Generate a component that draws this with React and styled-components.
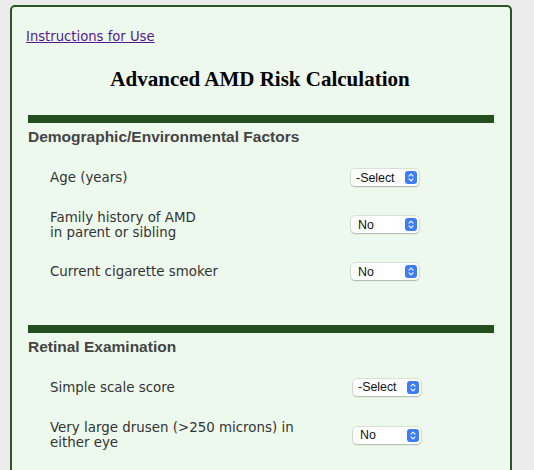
import React from "react";
import styled, { createGlobalStyle } from "styled-components";

const GlobalStyle = createGlobalStyle`
  body {
    margin: 0;
    background: #ececec;
  }
`;

const Card = styled.div`
  margin: 5px 22px 0 10px;
  padding: 20px 16px 40px 14px;
  min-height: 600px;
  border: 2px solid #285626;
  border-radius: 5px;
  background: #eef9ee;
`;

const HelpLink = styled.a`
  font-family: "DejaVu Sans", Verdana, sans-serif;
  font-size: 13.2px;
  line-height: 16px;
  color: #551a8b;
  text-decoration: underline;
`;

const Title = styled.h1`
  margin: 22px 0 24px;
  font-family: "Liberation Serif", "Times New Roman", serif;
  font-size: 21px;
  line-height: 24px;
  font-weight: bold;
  text-align: center;
  color: #000;
`;

const Section = styled.section`
  margin-left: 2px;
  & + & {
    margin-top: 30px;
  }
`;

const Bar = styled.div`
  height: 8px;
  background: #245020;
`;

const Heading = styled.h2`
  margin: 5px 0 ${(p) => p.$gap}px;
  font-family: "Liberation Sans", Arial, sans-serif;
  font-size: 15.5px;
  line-height: 18px;
  font-weight: bold;
  color: #444;
`;

const Row = styled.div`
  display: grid;
  grid-template-columns: ${(p) => p.$labelWidth}px 1fr;
  align-items: center;
  height: ${(p) => p.$height}px;
  padding-left: 22px;
`;

const Label = styled.div`
  font-family: "DejaVu Sans", Verdana, sans-serif;
  font-size: 13.4px;
  line-height: 15px;
  color: #333;
`;

const Select = styled.div`
  display: flex;
  align-items: center;
  justify-content: space-between;
  box-sizing: border-box;
  width: ${(p) => p.$width}px;
  height: 17px;
  padding: 0 2px 0 ${(p) => (p.$value === "No" ? 7 : 5)}px;
  background: #fff;
  border-radius: 4px;
  box-shadow: 0 0 0 0.5px rgba(0, 0, 0, 0.18), 0 1px 1.5px rgba(0, 0, 0, 0.2);
  font-family: "Liberation Sans", Arial, sans-serif;
  font-size: 12.4px;
  color: #111;
`;

const Stepper = styled.span`
  display: flex;
  align-items: center;
  justify-content: center;
  width: 12px;
  height: 13px;
  border-radius: 3px;
  background: #3d7ef7;
`;

const Chevrons = () => (
  <svg width="6" height="9" viewBox="0 0 6 9" fill="none">
    <path d="M1 3.2 L3 1.2 L5 3.2 M1 5.8 L3 7.8 L5 5.8" stroke="#fff" strokeWidth="1.1" strokeLinecap="round" strokeLinejoin="round" />
  </svg>
);

const Dropdown = ({ value, width }) => (
  <Select $value={value} $width={width}>
    <span>{value}</span>
    <Stepper>
      <Chevrons />
    </Stepper>
  </Select>
);

const sections = [
  {
    title: "Demographic/Environmental Factors",
    labelWidth: 301,
    selectWidth: 68,
    gap: 8,
    rowHeight: 47,
    rows: [
      { label: "Age (years)", value: "-Select" },
      { label: ["Family history of AMD", "in parent or sibling"], value: "No" },
      { label: "Current cigarette smoker", value: "No" },
    ],
  },
  {
    title: "Retinal Examination",
    labelWidth: 303,
    selectWidth: 68,
    gap: 7,
    rowHeight: 48,
    rows: [
      { label: "Simple scale score", value: "-Select" },
      { label: ["Very large drusen (>250 microns) in", "either eye"], value: "No" },
    ],
  },
];

export default function App() {
  return (
    <>
      <GlobalStyle />
      <Card>
        <HelpLink href="#">Instructions for Use</HelpLink>
        <Title>Advanced AMD Risk Calculation</Title>
        {sections.map((s) => (
          <Section key={s.title}>
            <Bar />
            <Heading $gap={s.gap}>{s.title}</Heading>
            {s.rows.map((r, i) => (
              <Row key={i} $labelWidth={s.labelWidth} $height={s.rowHeight}>
                <Label>
                  {Array.isArray(r.label)
                    ? r.label.map((line, j) => <div key={j}>{line}</div>)
                    : r.label}
                </Label>
                <Dropdown value={r.value} width={s.selectWidth} />
              </Row>
            ))}
          </Section>
        ))}
      </Card>
    </>
  );
}
